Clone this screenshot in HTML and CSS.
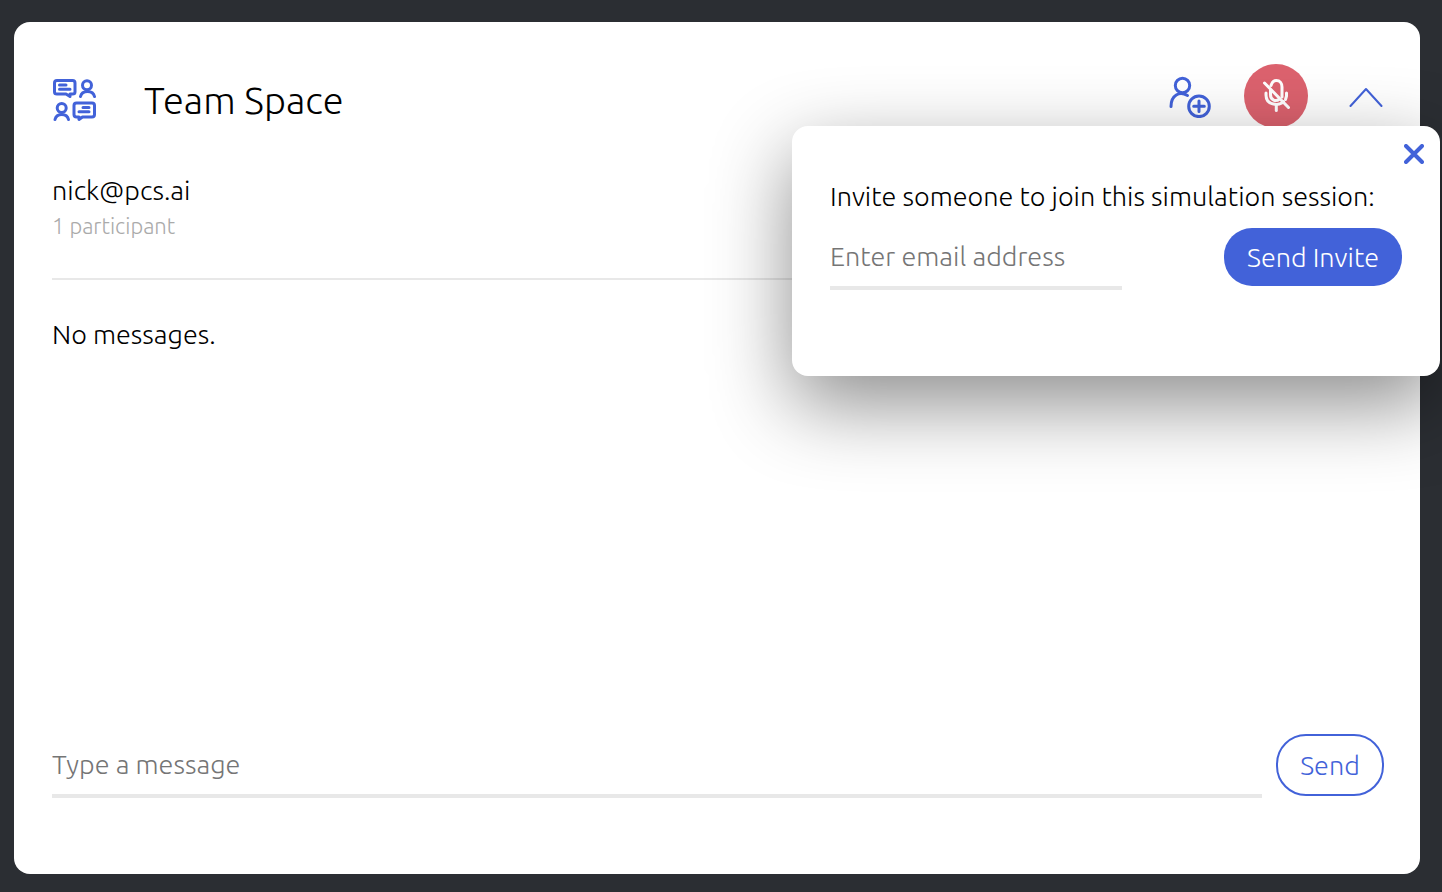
FILE: index.html
```html
<!DOCTYPE html>
<html lang="en">
<head>
  <meta charset="UTF-8">
  <title>Team Space</title>
  <meta name="viewport" content="width=device-width, initial-scale=1">
  <link rel="stylesheet" href="styles.css">
</head>
<body>

<main class="card">
  <header class="card-header">
    <svg class="team-icon" viewBox="0 0 44 44" aria-hidden="true">
      <path d="M5 2.500H20.500Q23 2.500 23 5V14Q23 16 20.500 16H18V18.500L14 16H5Q2.500 16 2.500 14V5Q2.500 2.500 5 2.500Z"/>
      <path d="M7.500 7H14M7.500 11.300H18"/>
      <circle cx="35" cy="7.300" r="4.500"/>
      <path d="M28.500 18.500C30 11.900 41 11.900 42.500 18.500"/>
      <circle cx="9.700" cy="30" r="4.500"/>
      <path d="M3 41.500C4.500 34.900 15 34.900 16.500 41.500"/>
      <path d="M24.500 25H40Q42.500 25 42.500 27.500V36.500Q42.500 39 40 39H30.500L27 41.500V39H24.500Q22 39 22 36.500V27.500Q22 25 24.500 25Z"/>
      <path d="M31 29.500H37M27 33.700H37"/>
    </svg>
    <h1>Team Space</h1>
    <div class="actions">
      <button type="button" class="icon-btn" aria-label="Invite participant">
        <svg class="invite-icon" viewBox="0 0 44 44" aria-hidden="true">
          <circle cx="14.500" cy="11.500" r="7.200"/>
          <path d="M3 32.500C3 21 11.500 16.800 19.500 21.500"/>
          <circle cx="31" cy="32.300" r="10.300"/>
          <path d="M31 27V37.600M25.700 32.300H36.300"/>
        </svg>
      </button>
      <button type="button" class="mute-btn" aria-label="Unmute microphone">
        <svg class="mic-icon" viewBox="0 0 32 36" aria-hidden="true">
          <path d="M11 7.500C12 4 14 2.500 16.300 2.500C20 2.500 22 5.500 22 9V19"/>
          <path d="M10.500 12V16.500C10.500 22.500 16 24 19.500 21"/>
          <path d="M6 15V17C6 28 20 28 23.500 23.500"/>
          <path d="M26.500 15V18L25.500 21.500"/>
          <path d="M16.300 27V32.500"/>
          <path d="M4.500 5L28.500 29.500"/>
        </svg>
      </button>
      <button type="button" class="icon-btn collapse-btn" aria-label="Collapse">
        <svg class="chevron-icon" viewBox="0 0 36 22" aria-hidden="true">
          <path d="M2.500 21L18 4L33.500 21"/>
        </svg>
      </button>
    </div>
  </header>

  <section class="participants">
    <p class="names">nick@pcs.ai</p>
    <p class="count">1 participant</p>
  </section>

  <section class="messages">
    <p>No messages.</p>
  </section>

  <form class="composer">
    <input type="text" class="field" aria-label="Message" placeholder="Type a message">
    <button type="button" class="send-btn">Send</button>
  </form>

  <!-- Invite popup, over the card -->
  <form class="popup">
    <button type="button" class="close-btn" aria-label="Close">
      <svg class="close-icon" viewBox="0 0 20 20" aria-hidden="true">
        <path d="M2 2L18 18M18 2L2 18"/>
      </svg>
    </button>
    <label for="email">Invite someone to join this simulation session:</label>
    <div class="invite-row">
      <input type="email" id="email" class="field" placeholder="Enter email address">
      <button type="button" class="invite-btn">Send Invite</button>
    </div>
  </form>
</main>

</body>
</html>
```
FILE: styles.css
```css
* {
  box-sizing: border-box;
}
body {
  margin: 0;
  padding: 22px 22px 18px 14px;
  min-height: 100vh;
  display: flex;
  background: #2b2e33;
  color: #000;
  font-family: Ubuntu, "Open Sans", sans-serif;
  font-size: 27px;
  font-weight: 300;
  line-height: 36px;
  overflow: hidden;
}
h1, p {
  margin: 0;
  font-weight: 300;
}
button, input {
  font: inherit;
}
button {
  padding: 0;
  border: none;
  background: none;
  cursor: pointer;
}
svg {
  display: block;
  fill: none;
  stroke: #4262d9;
  stroke-linecap: round;
  stroke-linejoin: round;
}
.card {
  position: relative;
  flex: 1;
  display: flex;
  flex-direction: column;
  padding: 42px 36px 76px 38px;
  background: #fff;
  border-radius: 16px;
}
.card-header {
  display: flex;
  align-items: center;
  height: 72px;
}
.team-icon {
  width: 44px;
  height: 44px;
  stroke-width: 3;
}
h1 {
  margin-left: 48px;
  font-size: 38px;
  line-height: 48px;
}
.actions {
  display: flex;
  align-items: center;
  align-self: flex-start;
  gap: 32px;
  height: 64px;
  margin-left: auto;
}
.invite-icon {
  width: 44px;
  height: 44px;
  stroke-width: 3;
}
.mute-btn {
  display: flex;
  justify-content: center;
  align-items: center;
  width: 64px;
  height: 64px;
  background: #dc626e;
  border-radius: 50%;
}
.mic-icon {
  width: 32px;
  height: 36px;
  stroke: #fff;
  stroke-width: 3;
}
.collapse-btn {
  margin-left: 8px;
}
.chevron-icon {
  width: 36px;
  height: 22px;
  stroke-width: 2;
}
.participants {
  padding: 36px 0 34px;
  border-bottom: 2px solid #e8e8e8;
}
.count {
  color: #aaa;
  font-size: 22px;
}
.messages {
  flex: 1;
  padding-top: 36px;
}
.field {
  min-width: 0;
  padding: 0 0 12px;
  border: none;
  border-bottom: 4px solid #e8e8e8;
  border-radius: 0;
  background: none;
  outline: none;
}
.field::placeholder {
  color: #757575;
  opacity: 1;
}
.composer {
  display: flex;
  align-items: flex-end;
  gap: 14px;
}
.composer .field {
  flex: 1;
}
.send-btn {
  width: 108px;
  height: 62px;
  margin-bottom: 2px;
  border: 2px solid #4262d9;
  border-radius: 30px;
  color: #4262d9;
}
.popup {
  position: absolute;
  top: 104px;
  right: -20px;
  width: 648px;
  height: 250px;
  padding: 52px 38px;
  background: #fff;
  border-radius: 16px;
  box-shadow: 0 28px 80px rgba(0, 0, 0, 0.45);
}
.popup label {
  display: block;
  white-space: nowrap;
}
.invite-row {
  display: flex;
  justify-content: space-between;
  padding-top: 14px;
}
.invite-row .field {
  width: 292px;
  height: 62px;
  padding-top: 10px;
}
.invite-btn {
  width: 178px;
  height: 58px;
  border-radius: 28px;
  background: #4262d9;
  color: #fff;
}
.close-btn {
  position: absolute;
  top: 18px;
  right: 16px;
}
.close-icon {
  width: 20px;
  height: 20px;
  stroke-width: 4;
}
```
